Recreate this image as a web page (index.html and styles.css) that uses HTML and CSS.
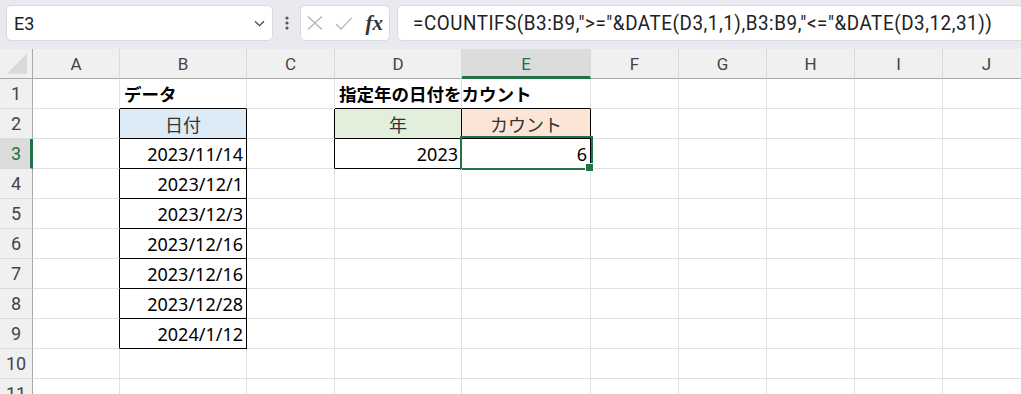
FILE: index.html
```html
<!DOCTYPE html>
<html lang="ja">
<head>
    <meta charset="UTF-8">
    <meta name="viewport" content="width=device-width, initial-scale=1.0">
    <title>COUNTIFS</title>
    <link rel="stylesheet" href="styles.css">
    <script>
        document.addEventListener("DOMContentLoaded", () => {
            buildSheet();
        });

        const columns = ['A', 'B', 'C', 'D', 'E', 'F', 'G', 'H', 'I', 'J'];
        const rowCount = 11;

        const values = {
            B1: { text: 'データ', cls: 'title' },
            D1: { text: '指定年の日付をカウント', cls: 'title' },
            B2: { text: '日付', cls: 'head fill-blue' },
            D2: { text: '年', cls: 'head fill-green' },
            E2: { text: 'カウント', cls: 'head fill-orange' },
            B3: { text: '2023/11/14', cls: 'num' },
            B4: { text: '2023/12/1', cls: 'num' },
            B5: { text: '2023/12/3', cls: 'num' },
            B6: { text: '2023/12/16', cls: 'num' },
            B7: { text: '2023/12/16', cls: 'num' },
            B8: { text: '2023/12/28', cls: 'num' },
            B9: { text: '2024/1/12', cls: 'num' },
            D3: { text: '2023', cls: 'num' },
            E3: { text: '6', cls: 'num active' }
        };

        // cells that carry the black table border
        const boxed = ['B2', 'B3', 'B4', 'B5', 'B6', 'B7', 'B8', 'B9', 'D2', 'D3', 'E2', 'E3'];

        function shift(ref, dc, dr) {
            const c = columns.indexOf(ref[0]) + dc;
            const r = parseInt(ref.slice(1)) + dr;
            return columns[c] + r;
        }

        function buildSheet() {
            const sheet = document.querySelector('.sheet');
            const leftOf = boxed.map(ref => shift(ref, -1, 0));
            const above = boxed.map(ref => shift(ref, 0, -1));

            const corner = document.createElement('div');
            corner.className = 'corner';
            corner.innerHTML = '<svg width="33" height="30" viewBox="0 0 33 30"><polygon points="28,4 28,25 7,25" fill="#dadada"/></svg>';
            sheet.appendChild(corner);

            columns.forEach(col => {
                const head = document.createElement('div');
                head.className = 'col-head' + (col === 'E' ? ' current' : '');
                head.textContent = col;
                sheet.appendChild(head);
            });

            for (let r = 1; r <= rowCount; r++) {
                const head = document.createElement('div');
                head.className = 'row-head' + (r === 3 ? ' current' : '');
                head.textContent = r;
                sheet.appendChild(head);

                columns.forEach(col => {
                    const ref = col + r;
                    const cell = document.createElement('div');
                    cell.classList.add('cell');
                    if (boxed.includes(ref)) cell.classList.add('boxed');
                    if (leftOf.includes(ref)) cell.classList.add('line-r');
                    if (above.includes(ref)) cell.classList.add('line-b');
                    const value = values[ref];
                    if (value) {
                        value.cls.split(' ').forEach(c => cell.classList.add(c));
                        cell.innerHTML = `<span>${value.text}</span>`;
                    }
                    sheet.appendChild(cell);
                });
            }
        }
    </script>
</head>
<body>
    <div class="toolbar">
        <div class="namebox">
            <span>E3</span>
            <svg width="11" height="7" viewBox="0 0 11 7"><path d="M1 1.2 L5.5 5.6 L10 1.2" fill="none" stroke="#444" stroke-width="1.2"/></svg>
        </div>
        <div class="grip">
            <svg width="4" height="14" viewBox="0 0 4 14"><circle cx="2" cy="2" r="1.6" fill="#555"/><circle cx="2" cy="7" r="1.6" fill="#555"/><circle cx="2" cy="12" r="1.6" fill="#555"/></svg>
        </div>
        <div class="fxbox">
            <svg width="17" height="16" viewBox="0 0 17 16"><path d="M1 1 L16 15 M16 1 L1 15" stroke="#b4b4b4" stroke-width="1.4" fill="none"/></svg>
            <svg width="19" height="15" viewBox="0 0 19 15"><path d="M1 8 L6.5 13.5 L18 1.5" stroke="#b4b4b4" stroke-width="1.4" fill="none"/></svg>
            <span class="fx">fx</span>
        </div>
        <div class="formula">
            <span>=COUNTIFS(B3:B9,"&gt;="&amp;DATE(D3,1,1),B3:B9,"&lt;="&amp;DATE(D3,12,31))</span>
        </div>
    </div>

    <div class="sheet"></div>
</body>
</html>
```

FILE: styles.css
```css
body {
    margin: 0;
    width: 1021px;
    height: 394px;
    overflow: hidden;
    background-color: #fff;
    font-family: "Noto Sans", "Noto Sans CJK JP", sans-serif;
    color: #000;
}

* {
    box-sizing: border-box;
}

.toolbar {
    height: 49px;
    background-color: #e8eaf0;
    display: flex;
    align-items: flex-start;
    padding: 5px 0 0 6px;
}

.namebox,
.fxbox,
.formula {
    height: 36px;
    background-color: #fff;
    border: 1px solid #d8dae0;
    border-radius: 5px;
    display: flex;
    align-items: center;
}

.namebox {
    width: 267px;
    padding: 0 7px 0 7px;
    justify-content: space-between;
    font-family: Roboto, sans-serif;
    font-size: 18px;
    color: #222;
}

.grip {
    width: 27px;
    height: 36px;
    display: flex;
    align-items: center;
    justify-content: center;
}

.fxbox {
    width: 90px;
    padding: 0 6px 0 6px;
    gap: 12px;
}

.fx {
    font-family: "Liberation Serif", serif;
    font-style: italic;
    font-weight: bold;
    font-size: 21px;
    color: #333;
    margin-left: 1px;
}

.formula {
    flex: 1;
    margin-left: 7px;
    margin-right: -10px;
    padding-left: 15px;
    font-family: Roboto, sans-serif;
    font-size: 20px;
    letter-spacing: 0.6px;
    color: #222;
    white-space: nowrap;
}

.formula span {
    display: inline-block;
    transform: scaleX(0.94);
    transform-origin: left center;
}

.sheet {
    display: grid;
    grid-template-columns: 33px 87px 127px 88px 127px 129px 88px 88px 88px 88px 88px;
    grid-auto-rows: 30px;
    background-color: #fff;
}

.corner,
.col-head,
.row-head {
    background-color: #f0f0f0;
    font-family: Roboto, sans-serif;
    font-size: 17px;
    color: #444;
    display: flex;
    align-items: center;
    justify-content: center;
}

.corner {
    border-right: 1px solid #a9a9a9;
    border-bottom: 1px solid #a9a9a9;
}

.col-head {
    border-right: 1px solid #dadada;
    border-bottom: 1px solid #a9a9a9;
}

.col-head.current {
    background-color: #dcdcdc;
    color: #217346;
    border-bottom: 3px solid #217346;
    padding-top: 2px;
}

.row-head {
    border-right: 1px solid #a9a9a9;
    border-bottom: 1px solid #dadada;
    font-size: 18px;
}

.row-head.current {
    background-color: #dcdcdc;
    color: #217346;
    border-right: 3px solid #217346;
    padding-left: 2px;
}

.cell {
    border-right: 1px solid #e1e1e1;
    border-bottom: 1px solid #e1e1e1;
    font-size: 18px;
    display: flex;
    align-items: center;
    white-space: nowrap;
    position: relative;
}

.cell.boxed {
    border-right-color: #000;
    border-bottom-color: #000;
}

.cell.line-r {
    border-right-color: #000;
}

.cell.line-b {
    border-bottom-color: #000;
}

.title {
    font-weight: bold;
    padding-left: 4px;
}

.cell.title {
    font-size: 17.5px;
}

.head {
    justify-content: center;
    color: #333;
}

.fill-blue {
    background-color: #ddebf7;
}

.fill-green {
    background-color: #e2efda;
}

.fill-orange {
    background-color: #fce4d6;
}

.num {
    justify-content: flex-end;
    padding-right: 3px;
}

.active::after {
    content: "";
    position: absolute;
    top: -3px;
    left: -2px;
    right: -3px;
    bottom: -2px;
    border: 2px solid #217346;
}

.active::before {
    content: "";
    position: absolute;
    right: -4px;
    bottom: -4px;
    width: 7px;
    height: 7px;
    background-color: #217346;
    border: 1px solid #fff;
    z-index: 1;
}
```
